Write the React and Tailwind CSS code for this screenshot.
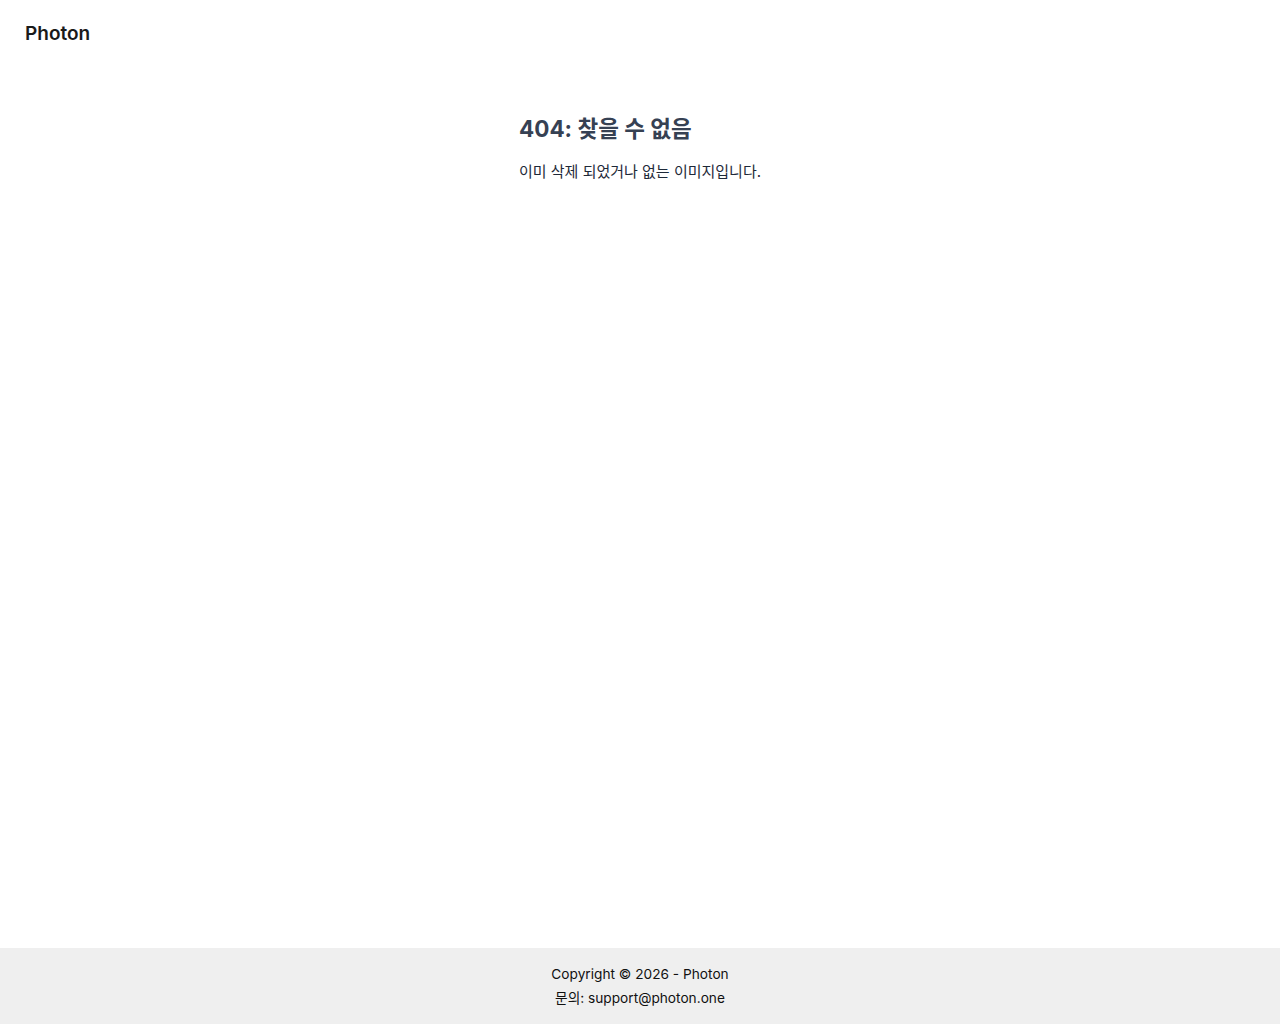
import React from "react";

export default function App() {
  return (
    <div
      className="min-h-screen flex flex-col bg-white text-gray-900"
      style={{ fontFamily: 'Inter, "Noto Sans CJK KR", sans-serif' }}
    >
      <header className="h-16 px-[25px] pt-[4px] flex items-center">
        <span className="text-[19px] font-semibold text-[#1a1a1a]">Photon</span>
      </header>

      <main className="flex-1 flex justify-center pt-12">
        <div>
          <h1 className="text-[22.5px] leading-8 font-bold text-gray-700 mb-[15px] pt-px">404: 찾을 수 없음</h1>
          <p className="text-[15px] leading-6 text-gray-800">이미 삭제 되었거나 없는 이미지입니다.</p>
        </div>
      </main>

      <footer className="bg-[#efefef] py-[14px] text-center text-[13.7px] leading-6 text-[#111]">
        <p>Copyright © 2026 - Photon</p>
        <p>문의: support@photon.one</p>
      </footer>
    </div>
  );
}
